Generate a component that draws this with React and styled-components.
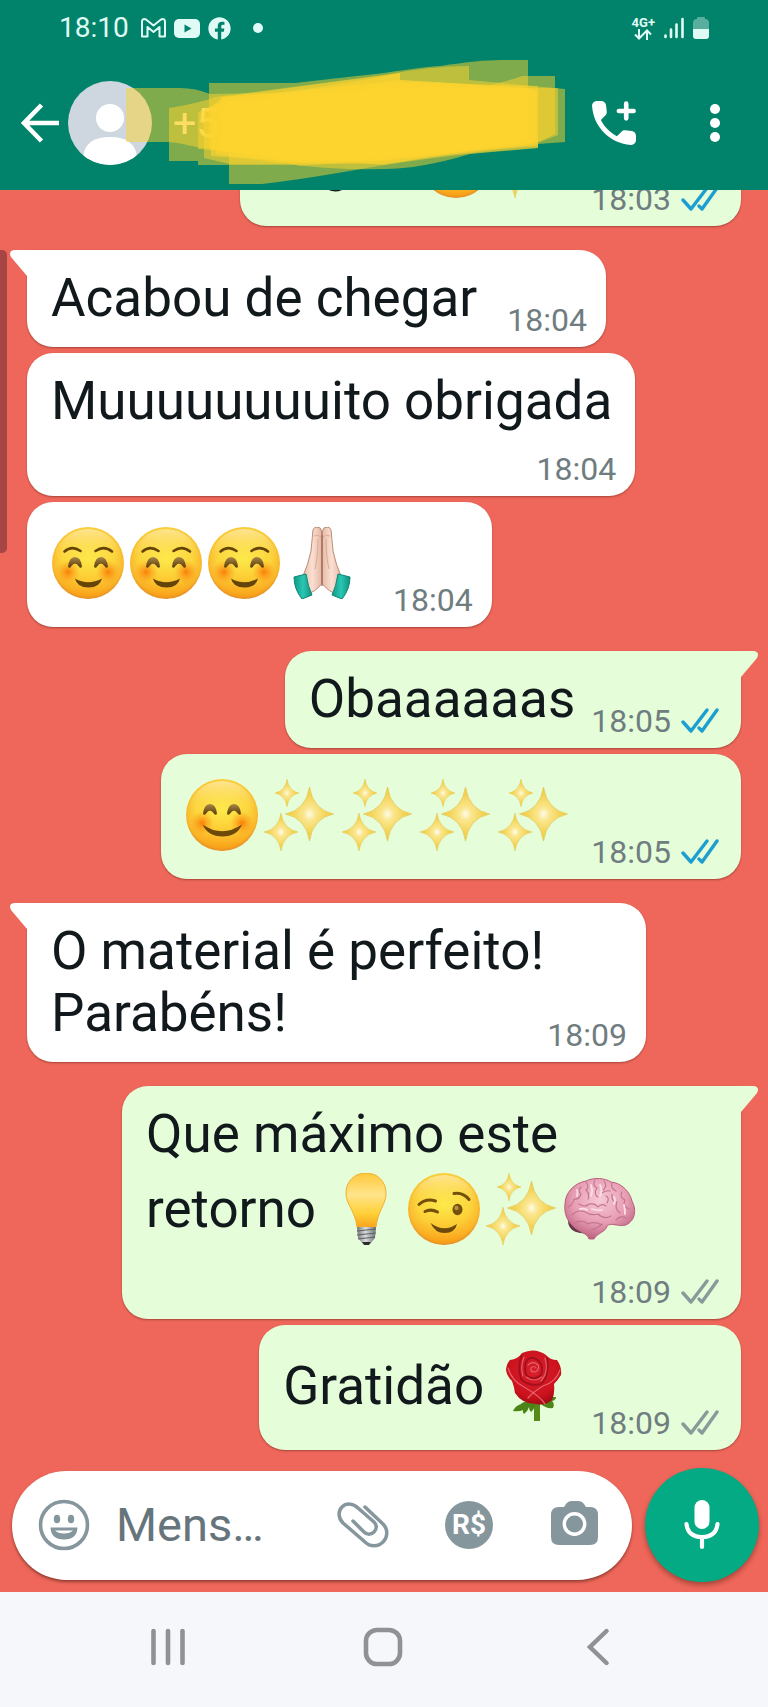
import React from "react";
import styled, { createGlobalStyle, css } from "styled-components";
import { FaFacebook } from "react-icons/fa";

const color = {
  header: "#00836a",
  wallpaper: "#ee675a",
  incoming: "#fefffe",
  outgoing: "#e5fed9",
  ink: "#11191c",
  meta: "#707d80",
  read: "#1c9ed0",
  sent: "#8a9a9b",
  icon: "#86969d",
  mic: "#03aa84",
  nav: "#f6f7fa",
  navIcon: "#909193",
};

const GlobalStyle = createGlobalStyle`
  * { box-sizing: border-box; }
  html, body { margin: 0; padding: 0; }
  body { font-family: Roboto, "Liberation Sans", sans-serif; color: ${color.ink}; }
  button { border: 0; padding: 0; background: none; color: inherit; font: inherit; cursor: pointer; }
`;

/* ---------- Layout ---------- */

const Screen = styled.div`
  display: flex;
  flex-direction: column;
  height: 100vh;
  background: ${color.wallpaper};
`;

const Header = styled.header`
  flex: none;
  background: ${color.header};
  color: #fff;
`;

const StatusBar = styled.div`
  display: flex;
  align-items: center;
  justify-content: space-between;
  height: 56px;
  padding: 0 59px;
  color: #e0fbf6;
`;

const StatusGroup = styled.div`
  display: flex;
  align-items: center;
  gap: ${(p) => p.$gap}px;
`;

const Clock = styled.time`
  margin-right: 4px;
  font-size: 28px;
  line-height: 34px;
`;

const Network = styled.span`
  display: flex;
  flex-direction: column;
  align-items: center;
  font-size: 13px;
  font-weight: 700;
  line-height: 13px;
`;

const AppBar = styled.div`
  display: flex;
  align-items: center;
  height: 134px;
  padding: 0 31px 0 20px;
`;

const IconButton = styled.button`
  display: flex;
  flex: none;
  align-items: center;
  justify-content: center;
  width: ${(p) => p.$size}px;
  height: ${(p) => p.$size}px;
`;

const Contact = styled.div`
  position: relative;
  display: flex;
  flex: 1;
  align-items: center;
  gap: 21px;
  min-width: 0;
  margin-left: 8px;
`;

const ContactName = styled.h1`
  margin: 0;
  font-size: 41px;
  font-weight: 400;
  line-height: 48px;
`;

const Scribble = styled.svg`
  position: absolute;
  top: -21px;
  left: 58px;
  pointer-events: none;
`;

const HeaderActions = styled.div`
  display: flex;
  gap: 57px;
`;

const Chat = styled.main`
  position: relative;
  display: flex;
  flex: 1;
  flex-direction: column-reverse;
  min-height: 0;
  overflow-y: auto;
  scrollbar-width: none;
`;

const ScrollThumb = styled.div`
  position: absolute;
  top: 60px;
  left: 0;
  width: 7px;
  height: 303px;
  border-radius: 0 5px 5px 0;
  background: #a74545;
`;

const Messages = styled.ol`
  display: flex;
  flex: none;
  flex-direction: column;
  margin: 0;
  padding: 0 27px 18px;
  list-style: none;
`;

const incomingSide = css`
  align-self: flex-start;
  background: ${color.incoming};
`;

const outgoingSide = css`
  align-self: flex-end;
  background: ${color.outgoing};
`;

const Bubble = styled.li`
  position: relative;
  display: flex;
  flex-direction: ${(p) => (p.$stacked ? "column" : "row")};
  align-items: flex-end;
  column-gap: ${(p) => (p.$wide ? 0 : p.$out ? 16 : 30)}px;
  row-gap: 8px;
  max-width: 619px;
  margin-top: ${(p) => (p.$tail ? 24 : 6)}px;
  padding: 17px 19px 8px 24px;
  border-radius: 26px;
  box-shadow: 0 1px 2px rgba(60, 20, 10, 0.4);
  ${(p) => (p.$out ? outgoingSide : incomingSide)}
  ${(p) => p.$tail && (p.$out ? "border-top-right-radius: 0;" : "border-top-left-radius: 0;")}
`;

const Text = styled.p`
  flex: 1 1 auto;
  align-self: stretch;
  margin: 0 0 10px;
  padding-right: ${(p) => (p.$stacked ? 4 : 0)}px;
  font-size: 53px;
  line-height: 62px;
`;

const Meta = styled.span`
  display: flex;
  flex: none;
  align-items: center;
  gap: 10px;
  color: ${color.meta};
  font-size: 32px;
  line-height: 38px;
`;

const Ticks = styled.svg`
  margin-right: 3px;
  color: ${(p) => (p.$read ? color.read : color.sent)};
`;

const Tail = styled.svg`
  position: absolute;
  top: 0;
  ${(p) => (p.$out ? "right: -17px; transform: scaleX(-1);" : "left: -17px;")}
`;

const EmojiSvg = styled.svg`
  display: inline-block;
  width: 72px;
  height: 72px;
  margin: 8px 5px 10px 1px;
  vertical-align: -28px;
`;

const Composer = styled.form`
  display: flex;
  flex: none;
  align-items: center;
  gap: 13px;
  padding: 0 9px 10px 12px;
`;

const InputPill = styled.div`
  display: flex;
  flex: 1;
  align-items: center;
  gap: 54px;
  min-width: 0;
  height: 109px;
  padding: 0 31px 0 26px;
  border-radius: 55px;
  background: ${color.incoming};
  box-shadow: 0 2px 3px rgba(60, 20, 10, 0.5);
  color: ${color.icon};
`;

const Entry = styled.div`
  display: flex;
  flex: 1;
  align-items: center;
  gap: 26px;
  min-width: 0;
`;

const MessageInput = styled.input`
  flex: 1;
  width: 0;
  min-width: 0;
  padding: 0;
  border: 0;
  outline: 0;
  background: none;
  color: ${color.ink};
  font-family: inherit;
  font-size: 47px;
  line-height: 56px;
  text-overflow: ellipsis;

  &::placeholder {
    color: #66757b;
    opacity: 1;
    text-overflow: ellipsis;
  }
`;

const MoneyBadge = styled.span`
  width: 48px;
  height: 48px;
  border-radius: 50%;
  background: ${color.icon};
  color: #fff;
  font-size: 28px;
  font-weight: 700;
  line-height: 48px;
  text-align: center;
`;

const MicButton = styled(IconButton)`
  border-radius: 50%;
  background: ${color.mic};
  box-shadow: 0 3px 5px rgba(60, 20, 10, 0.4);
`;

const NavBar = styled.nav`
  display: flex;
  flex: none;
  height: 115px;
  padding: 0 63px 5px 60px;
  background: ${color.nav};
  color: ${color.navIcon};
`;

const NavButton = styled.button`
  display: flex;
  flex: 1;
  align-items: center;
  justify-content: center;
`;

/* ---------- Emoji ---------- */

const STAR = "M0-1Q.14-.16 1 0Q.14.16 0 1Q-.14.16-1 0Q-.14-.16 0-1Z";

function Gradients() {
  return (
    <svg width="0" height="0" style={{ position: "absolute" }} aria-hidden="true">
      <defs>
        <radialGradient id="skin" cx=".5" cy=".42" r=".58">
          <stop offset="0" stopColor="#fdec4c" />
          <stop offset=".62" stopColor="#fbd73c" />
          <stop offset=".87" stopColor="#f8b62c" />
          <stop offset="1" stopColor="#e68a20" />
        </radialGradient>
        <linearGradient id="warm" x1="0" y1="0" x2="0" y2="1">
          <stop offset="0" stopColor="#ffe9b0" stopOpacity=".75" />
          <stop offset=".45" stopColor="#ffd23a" stopOpacity=".1" />
          <stop offset="1" stopColor="#fb9d12" stopOpacity=".75" />
        </linearGradient>
        <radialGradient id="cheek">
          <stop offset="0" stopColor="#fa7605" stopOpacity=".9" />
          <stop offset="1" stopColor="#fa9d1a" stopOpacity="0" />
        </radialGradient>
        <linearGradient id="eye" x1="0" y1="0" x2="0" y2="1">
          <stop offset="0" stopColor="#a78549" />
          <stop offset="1" stopColor="#5c3c05" />
        </linearGradient>
        <radialGradient id="glow">
          <stop offset="0" stopColor="#fffbe8" />
          <stop offset=".25" stopColor="#fae68e" />
          <stop offset="1" stopColor="#efc62c" />
        </radialGradient>
        <linearGradient id="bulb" x1="0" y1="0" x2="0" y2="1">
          <stop offset="0" stopColor="#ffc83a" />
          <stop offset=".4" stopColor="#ffe48b" />
          <stop offset=".75" stopColor="#ffd037" />
          <stop offset="1" stopColor="#f8a51e" />
        </linearGradient>
        <linearGradient id="screw" x1="0" y1="0" x2="1" y2="0">
          <stop offset="0" stopColor="#747678" />
          <stop offset=".45" stopColor="#dadcdd" />
          <stop offset="1" stopColor="#6b6d70" />
        </linearGradient>
        <radialGradient id="brain" cx=".5" cy=".35" r=".65">
          <stop offset="0" stopColor="#f6c9d6" />
          <stop offset=".6" stopColor="#e79db3" />
          <stop offset="1" stopColor="#bd6281" />
        </radialGradient>
        <linearGradient id="hand" x1="0" y1="0" x2="1" y2="0">
          <stop offset="0" stopColor="#e8bda9" />
          <stop offset=".5" stopColor="#fae0d2" />
          <stop offset="1" stopColor="#e6b8a4" />
        </linearGradient>
        <linearGradient id="cuff" x1="0" y1="0" x2="1" y2="0">
          <stop offset="0" stopColor="#119a87" />
          <stop offset=".5" stopColor="#29c7b2" />
          <stop offset="1" stopColor="#10917f" />
        </linearGradient>
        <radialGradient id="petal" cx=".5" cy=".4" r=".65">
          <stop offset="0" stopColor="#d91f2c" />
          <stop offset=".7" stopColor="#cc121d" />
          <stop offset="1" stopColor="#960912" />
        </radialGradient>
      </defs>
    </svg>
  );
}

function FaceBase({ cheeks, cheekY = 45 }) {
  return (
    <>
      <circle cx="36" cy="36" r="36" fill="url(#skin)" />
      <circle cx="36" cy="36" r="34" fill="url(#warm)" />
      {cheeks && (
        <>
          <circle cx="16" cy={cheekY} r="12" fill="url(#cheek)" />
          <circle cx="56" cy={cheekY} r="12" fill="url(#cheek)" />
        </>
      )}
    </>
  );
}

function HappyEyes({ y, left, right }) {
  const d = "M0 10Q1 0 7 0Q13 0 14 10Q12 12 10.500 9Q7 4 3.500 9Q2 12 0 10Z";
  return (
    <>
      <path d="M2 9Q3 2 7 2Q11 2 12 9Q7 4 2 9Z" transform={`translate(${left} ${y})`} fill="#b08d50" />
      <path d="M2 9Q3 2 7 2Q11 2 12 9Q7 4 2 9Z" transform={`translate(${right} ${y})`} fill="#b08d50" />
      <path d={d} transform={`translate(${left} ${y})`} fill="url(#eye)" />
      <path d={d} transform={`translate(${right} ${y})`} fill="url(#eye)" />
    </>
  );
}

function Blush() {
  return (
    <>
      <FaceBase cheeks />
      <g fill="none" stroke="#654407" strokeWidth="2.6" strokeLinecap="round">
        <path d="M12.500 24.500Q20 18 28.500 24" />
        <path d="M43.500 24Q52 18 60 24.500" />
      </g>
      <HappyEyes y={30} left={16} right={42} />
      <path d="M23 51.500Q36 59 50 51.500Q48 60.500 36.500 60.500Q25 60.500 23 51.500Z" fill="#654407" />
    </>
  );
}

function Smile() {
  return (
    <>
      <FaceBase cheeks cheekY={44} />
      <HappyEyes y={25} left={17} right={41} />
      <path d="M16.500 45.500Q36 59 56 45.500Q51 57.500 36.500 57.500Q22 57.500 16.500 45.500Z" fill="#6d4a0a" />
    </>
  );
}

function Wink() {
  return (
    <>
      <FaceBase />
      <g fill="none" stroke="#75500d" strokeWidth="3" strokeLinecap="round">
        <path d="M11 31.500Q18 25 27.500 28" />
        <path d="M46 20.500Q55 19 61 26.500" />
        <path d="M17 38.500Q23 35.500 29.500 39" />
      </g>
      <ellipse cx="49.500" cy="36.500" rx="5" ry="5.800" fill="#75500d" />
      <circle cx="48.500" cy="35" r="2.200" fill="#b5903f" />
      <path d="M22.500 50Q36 60 49 51Q47 60 36.500 60Q27 60 22.500 50Z" fill="#6d4a0a" />
    </>
  );
}

function Sparkles() {
  return (
    <g fill="url(#glow)" stroke="#e6c453" strokeWidth=".03">
      <path d={STAR} transform="translate(45.500 35) scale(24 27)" />
      <path d={STAR} transform="translate(23 14) scale(12 14)" />
      <path d={STAR} transform="translate(17 53) scale(17 19)" />
    </g>
  );
}

function Bulb() {
  return (
    <>
      <path d="M36 0C48 0 56 9 56 20C56 32 48 37 46 54H27C25 37 16 32 16 20C16 9 24 0 36 0Z" fill="url(#bulb)" stroke="#f2ae2c" />
      <path d="M27 54H46L45 65L40 71H33L28 65Z" fill="url(#screw)" />
      <path d="M27 58L46 56M27 62L46 60M28 66L45 64" stroke="#5f6265" strokeWidth="1.200" />
      <path d="M32 69H41L39 72H34Z" fill="#2d2c2c" />
    </>
  );
}

function Brain() {
  return (
    <>
      <path d="M4 45Q3 58 16 60L27 61L24 50Z" fill="#643a4a" />
      <path
        d="M1 31C1 20 10 10 22 8C30 4 41 5 47 9C58 10 66 19 68 28C73 37 71 48 62 52C54 54 47 49 43 53C42 59 33 60 30 66H25C23 59 14 60 7 51C2 46 0 38 1 31Z"
        fill="url(#brain)"
        stroke="#b8627f"
      />
      <g fill="none" stroke="#c27690" strokeWidth="1.200" strokeLinecap="round" strokeLinejoin="round">
        <path d="M4 34Q9 32 10 26Q15 27 17 21Q13 18 17 14M22 9Q26 14 22 17Q26 21 24 26M31 7Q28 12 33 15Q29 21 34 24M40 8Q44 13 39 17M48 10Q46 15 52 18" />
        <path d="M8 42Q14 36 21 39Q27 43 34 41Q40 47 47 43M11 50Q18 46 24 51Q30 48 38 52M15 31Q21 35 25 31Q31 30 34 34Q37 30 42 33M42 23Q46 25 43 30M48 21Q47 29 53 29Q50 36 56 40M58 19Q55 24 61 27Q58 33 65 36M52 47Q56 42 62 45M38 20Q42 17 46 18M27 57Q34 55 38 51" />
      </g>
      <g fill="none" stroke="#fbdfe7" strokeWidth="1.800" strokeLinecap="round">
        <path d="M13 23Q14 18 13 17M27 12Q29 18 27 23M36 12Q39 17 36 23M50 24Q52 27 50 31M28 36Q34 38 38 37M16 36Q21 35 23 37M60 32Q61 37 61 41" />
      </g>
    </>
  );
}

function Hands() {
  return (
    <>
      <path d="M27 3Q28 0 31 0Q35 0 35.500 4V57Q28 66 22 66L17 49Q22 38 25 24Z" fill="url(#hand)" stroke="#bd8a78" />
      <path d="M45 3Q44 0 41 0Q37 0 36.500 4V57Q44 66 50 66L55 49Q50 38 47 24Z" fill="url(#hand)" stroke="#bd8a78" />
      <path d="M28 9Q32 7 35 10M44 9Q40 7 37 10M32 12Q32 30 29 42M40 12Q40 30 43 42" fill="none" stroke="#d9ab99" />
      <path d="M36 8V59" stroke="#a87464" strokeWidth="1.400" />
      <path d="M8 50L20 47Q22 60 26 68L16 72Q8 62 8 50Z" fill="url(#cuff)" stroke="#0d8676" />
      <path d="M64 50L52 47Q50 60 46 68L56 72Q64 62 64 50Z" fill="url(#cuff)" stroke="#0d8676" />
    </>
  );
}

function Rose() {
  return (
    <>
      <path d="M36 50H42V71H36Z" fill="#558b16" />
      <path d="M37 52Q27 50 23 54Q17 56 15 61Q21 62 25 60Q24 62 26 64Q30 61 31 57Q31 60 33 62Q38 57 38 53ZM40 54Q46 46 58 47Q58 50 54 51Q57 54 55 58Q48 59 43 54Z" fill="#4c8418" />
      <path
        d="M12 10Q20 9 24 3Q37-3 48 5Q52 10 59 10Q64 17 63 25Q60 30 56 34Q57 44 54 50Q47 56 38 54Q24 54 17 43Q16 36 14 31Q8 25 8 19Q9 13 12 10Z"
        fill="url(#petal)"
      />
      <g fill="none" stroke="#a0101b" strokeWidth="1.800">
        <path d="M24 5Q19 16 23 29Q31 37 43 34Q52 26 49 7M29 10Q25 18 29 26Q37 31 43 25Q46 17 41 11Q34 5 29 10" />
      </g>
      <g fill="none" stroke="#e4606a" strokeWidth="1.200" strokeLinecap="round">
        <path d="M10 18Q14 31 26 37Q42 46 47 54M62 20Q58 32 45 36Q35 42 30 48M26 7Q22 17 25 26M47 8Q51 22 43 31M30 15Q35 10 40 15Q42 20 37 22Q32 22 33 18Q36 15 38 18" />
        <path d="M28 27Q36 33 44 27" />
      </g>
    </>
  );
}

const EMOJI = {
  blush: ["☺️", Blush],
  smile: ["😊", Smile],
  wink: ["😉", Wink],
  sparkles: ["✨", Sparkles],
  bulb: ["💡", Bulb],
  brain: ["🧠", Brain],
  hands: ["🙏🏻", Hands],
  rose: ["🌹", Rose],
};

function Emoji({ name }) {
  const [label, Drawing] = EMOJI[name];
  return (
    <EmojiSvg viewBox="0 0 72 72" role="img" aria-label={label}>
      <Drawing />
    </EmojiSvg>
  );
}

/* ---------- Messages ---------- */

const MESSAGES = [
  { id: 1, out: true, read: true, time: "18:03", text: "Legal! ", emoji: ["smile", "sparkles"] },
  { id: 2, tail: true, time: "18:04", text: "Acabou de chegar" },
  { id: 3, stacked: true, time: "18:04", text: "Muuuuuuuuito obrigada" },
  { id: 4, time: "18:04", emoji: ["blush", "blush", "blush", "hands"] },
  { id: 5, out: true, tail: true, read: true, time: "18:05", text: "Obaaaaaas" },
  { id: 6, out: true, read: true, time: "18:05", emoji: ["smile", "sparkles", "sparkles", "sparkles", "sparkles"] },
  { id: 7, tail: true, wide: true, time: "18:09", text: "O material é perfeito! Parabéns!" },
  { id: 8, out: true, tail: true, stacked: true, time: "18:09", text: "Que máximo este retorno ", emoji: ["bulb", "wink", "sparkles", "brain"] },
  { id: 9, out: true, time: "18:09", text: "Gratidão ", emoji: ["rose"] },
];

function Message({ out, tail, stacked, wide, read, time, text, emoji = [] }) {
  return (
    <Bubble $out={out} $tail={tail} $stacked={stacked} $wide={wide}>
      {tail && (
        <Tail $out={out} width="18" height="27" viewBox="0 0 18 27" aria-hidden="true">
          <path d="M18 0H4Q-2 1 1 7L17 26H18Z" fill={out ? color.outgoing : color.incoming} />
        </Tail>
      )}
      <Text $stacked={stacked}>
        {text}
        {emoji.map((name, i) => (
          <Emoji key={i} name={name} />
        ))}
      </Text>
      <Meta>
        <time>{time}</time>
        {out && (
          <Ticks $read={read} width="38" height="26" viewBox="0 0 38 26" role="img" aria-label={read ? "Lida" : "Entregue"}>
            <path
              d="M2 14L10 23L26 2M18 20L21 23L36 2"
              fill="none"
              stroke="currentColor"
              strokeWidth="3.400"
              strokeLinecap="round"
              strokeLinejoin="round"
            />
          </Ticks>
        )}
      </Meta>
    </Bubble>
  );
}

/* ---------- Header pieces ---------- */

function StatusIcons() {
  return (
    <StatusBar>
      <StatusGroup $gap={8}>
        <Clock>18:10</Clock>
        <svg width="25" height="20" viewBox="0 0 25 20" fill="none" stroke="currentColor" strokeWidth="2" strokeLinejoin="round" aria-hidden="true">
          <path d="M1 18.500V4Q1 0 5 1.500L12.500 7.500L20 1.500Q24 0 24 4V18.500H18.500V9L12.500 14L6.500 9V18.500Z" />
        </svg>
        <svg width="26" height="19" viewBox="0 0 26 19" aria-hidden="true">
          <rect width="26" height="19" rx="5" fill="currentColor" />
          <path d="M10.500 5.500V13.500L17.500 9.500Z" fill={color.header} />
        </svg>
        <FaFacebook size={23} aria-hidden="true" />
        <svg width="36" height="10" viewBox="0 0 36 10" aria-hidden="true">
          <circle cx="19" cy="5" r="5" fill="currentColor" />
        </svg>
      </StatusGroup>
      <StatusGroup $gap={9}>
        <Network>
          4G+
          <svg width="18" height="11" viewBox="0 0 18 11" fill="none" stroke="currentColor" strokeWidth="2" aria-hidden="true">
            <path d="M5 0V9.500M1 5.500L5 9.500L9 5.500M13 11V1.500M9 5.500L13 1.500L17 5.500" />
          </svg>
        </Network>
        <svg width="20" height="22" viewBox="0 0 20 22" stroke="currentColor" strokeWidth="2.600" strokeLinecap="round" aria-hidden="true">
          <path d="M1.500 18.500V20M7 12.500V20M12.500 7.500V20M18.500 2V20" />
        </svg>
        <svg width="16" height="22" viewBox="0 0 16 22" aria-hidden="true">
          <path d="M4 2V1Q4 0 5 0H11Q12 0 12 1V2Q16 2 16 6V12H0V6Q0 2 4 2Z" fill="#5aae9e" />
          <path d="M0 12H16V19Q16 22 13 22H3Q0 22 0 19Z" fill="currentColor" />
        </svg>
      </StatusGroup>
    </StatusBar>
  );
}

function Marker() {
  return (
    <Scribble width="440" height="126" viewBox="126 60 440 126" aria-hidden="true">
      <g fill="#fdd42e" fillOpacity=".5">
        <path d="M126 88H180Q196 88 210 94L500 90V142L300 162Q240 150 200 148Q176 142 168 142H126Z" />
        <path d="M209 83H295Q320 80 384 73Q430 66 440 66Q480 60 500 60H528V84V140L384 165L209 150Z" />
        <path d="M169 108Q200 103 215 97L384 75Q430 66 469 66V80L565 89V142L538 144L470 153L300 166Q230 150 198 149V161H169Z" />
        <path d="M198 112L215 104L222 97L400 73V82L475 88Q500 84 522 76H555V134L538 142V148L470 154Q420 169 384 169Q330 170 300 165H198Z" />
        <path d="M229 150V184H262Q300 180 384 165Q470 152 538 148V86L400 82L222 98Z" />
        <path d="M204 112L216 103L400 88H558V135L540 142L384 164H230L204 158Z" />
      </g>
      <g fill="#fdd42e" fillOpacity=".6">
        <path d="M211 112L222 97Q310 92 400 73V80L469 84L538 90V146L468 151L384 161Q310 165 278 160L240 158L211 156Z" />
        <path d="M216 112L226 99L400 80L530 88V144L384 160L280 163L216 154Z" />
        <path d="M222 104L400 84L536 90V142L384 158L280 160L222 150Z" />
      </g>
    </Scribble>
  );
}

export default function App() {
  return (
    <Screen>
      <GlobalStyle />
      <Gradients />
      <Header>
        <StatusIcons />
        <AppBar>
          <IconButton $size={40} type="button" aria-label="Voltar">
            <svg width="40" height="40" viewBox="0 0 40 40" fill="none" stroke="currentColor" strokeWidth="4.600">
              <path d="M21.500 2L4 20L21.500 38M3 20H39" />
            </svg>
          </IconButton>
          <Contact>
            <svg width="84" height="84" viewBox="0 0 84 84" role="img" aria-label="Foto do contato">
              <clipPath id="avatarClip">
                <circle cx="42" cy="42" r="42" />
              </clipPath>
              <g clipPath="url(#avatarClip)">
                <rect width="84" height="84" fill="#ced6df" />
                <circle cx="42" cy="37" r="14" fill="#fff" />
                <path d="M15 76Q17 56 42 56Q67 56 69 76V84H15Z" fill="#fff" />
              </g>
            </svg>
            <ContactName>+5</ContactName>
            <Marker />
          </Contact>
          <HeaderActions>
            <IconButton $size={44} type="button" aria-label="Ligar">
              <svg width="44" height="44" viewBox="3 3 18 18" fill="currentColor">
                <path d="M19.230 15.260l-2.540-.290c-.610-.070-1.210.140-1.640.570l-1.840 1.840c-2.830-1.440-5.150-3.750-6.590-6.590l1.850-1.850c.430-.430.640-1.030.570-1.640l-.290-2.520c-.120-1.010-.970-1.770-1.990-1.770H5.030c-1.130 0-2.070.940-2 2.070.530 8.540 7.360 15.360 15.890 15.890 1.130.070 2.070-.870 2.070-2v-1.730c.010-1.010-.750-1.860-1.760-1.980z" />
                <path d="M17 4.100V10.100M14 7.100H20" stroke="currentColor" strokeWidth="1.900" strokeLinecap="round" />
              </svg>
            </IconButton>
            <IconButton $size={44} type="button" aria-label="Mais opções">
              <svg width="10" height="40" viewBox="0 0 10 40" fill="currentColor">
                <circle cx="5" cy="6" r="5" />
                <circle cx="5" cy="20" r="5" />
                <circle cx="5" cy="34" r="5" />
              </svg>
            </IconButton>
          </HeaderActions>
        </AppBar>
      </Header>

      <Chat>
        <Messages>
          {MESSAGES.map((m) => (
            <Message key={m.id} {...m} />
          ))}
        </Messages>
        <ScrollThumb />
      </Chat>

      <Composer onSubmit={(e) => e.preventDefault()}>
        <InputPill>
          <Entry>
            <IconButton $size={52} type="button" aria-label="Emojis">
              <svg width="52" height="52" viewBox="0 0 52 52" fill="currentColor">
                <circle cx="26" cy="26" r="23.500" fill="none" stroke="currentColor" strokeWidth="3.600" />
                <ellipse cx="19" cy="20" rx="3.200" ry="4.300" />
                <ellipse cx="33" cy="20" rx="3.200" ry="4.300" />
                <path d="M12.500 28.500H39.500Q39 40.500 26 40.500Q13 40.500 12.500 28.500Z" />
                <path d="M17 31.500H35Q32 34.500 26 34.500Q20 34.500 17 31.500Z" fill="#fff" />
              </svg>
            </IconButton>
            <MessageInput type="text" aria-label="Mensagem" placeholder="Mensagem" />
          </Entry>
          <IconButton $size={52} type="button" aria-label="Anexar">
            <svg width="52" height="48" viewBox="0 0 52 48" fill="none" stroke="currentColor" strokeWidth="3.500" strokeLinecap="round">
              <path d="M28 6L46 23C51 28 51 36 46 41C41 46 33 46 28 41L6 22C1 17 1 10 5 6C9 2 16 2 21 7L37 21C40 24 40 28 37 31C34 34 30 34 27 31L16 20" />
            </svg>
          </IconButton>
          <IconButton $size={52} type="button" aria-label="Pagamento">
            <MoneyBadge>R$</MoneyBadge>
          </IconButton>
          <IconButton $size={52} type="button" aria-label="Câmera">
            <svg width="48" height="52" viewBox="0 0 48 52">
              <path d="M13 8L15 5Q17 2 21 2H27Q31 2 33 5L35 8H39Q47 8 47 16V38Q47 46 39 46H8Q0 46 0 38V16Q0 8 8 8Z" fill="currentColor" />
              <circle cx="23.500" cy="25" r="10.200" fill="none" stroke="#fff" strokeWidth="3.400" />
            </svg>
          </IconButton>
        </InputPill>
        <MicButton $size={114} type="button" aria-label="Gravar áudio">
          <svg width="36" height="50" viewBox="0 0 36 50" fill="none" stroke="#fff" strokeWidth="4.200" strokeLinecap="round">
            <rect x="10.500" y="0" width="15" height="29" rx="7.500" fill="#fff" stroke="none" />
            <path d="M2.500 24Q4 37 18 37Q32 37 33.500 24M18 37V47" />
          </svg>
        </MicButton>
      </Composer>

      <NavBar aria-label="Navegação do sistema">
        <NavButton type="button" aria-label="Recentes">
          <svg width="34" height="38" viewBox="0 0 34 38" stroke="currentColor" strokeWidth="4.600" strokeLinecap="round">
            <path d="M2.500 3V35M17 3V35M31.500 3V35" />
          </svg>
        </NavButton>
        <NavButton type="button" aria-label="Início">
          <svg width="40" height="40" viewBox="0 0 40 40" fill="none" stroke="currentColor" strokeWidth="4.600">
            <rect x="3" y="3" width="34" height="34" rx="11" />
          </svg>
        </NavButton>
        <NavButton type="button" aria-label="Voltar">
          <svg width="22" height="38" viewBox="0 0 22 38" fill="none" stroke="currentColor" strokeWidth="4.400" strokeLinecap="round">
            <path d="M19.500 3L3 19L19.500 35" />
          </svg>
        </NavButton>
      </NavBar>
    </Screen>
  );
}
